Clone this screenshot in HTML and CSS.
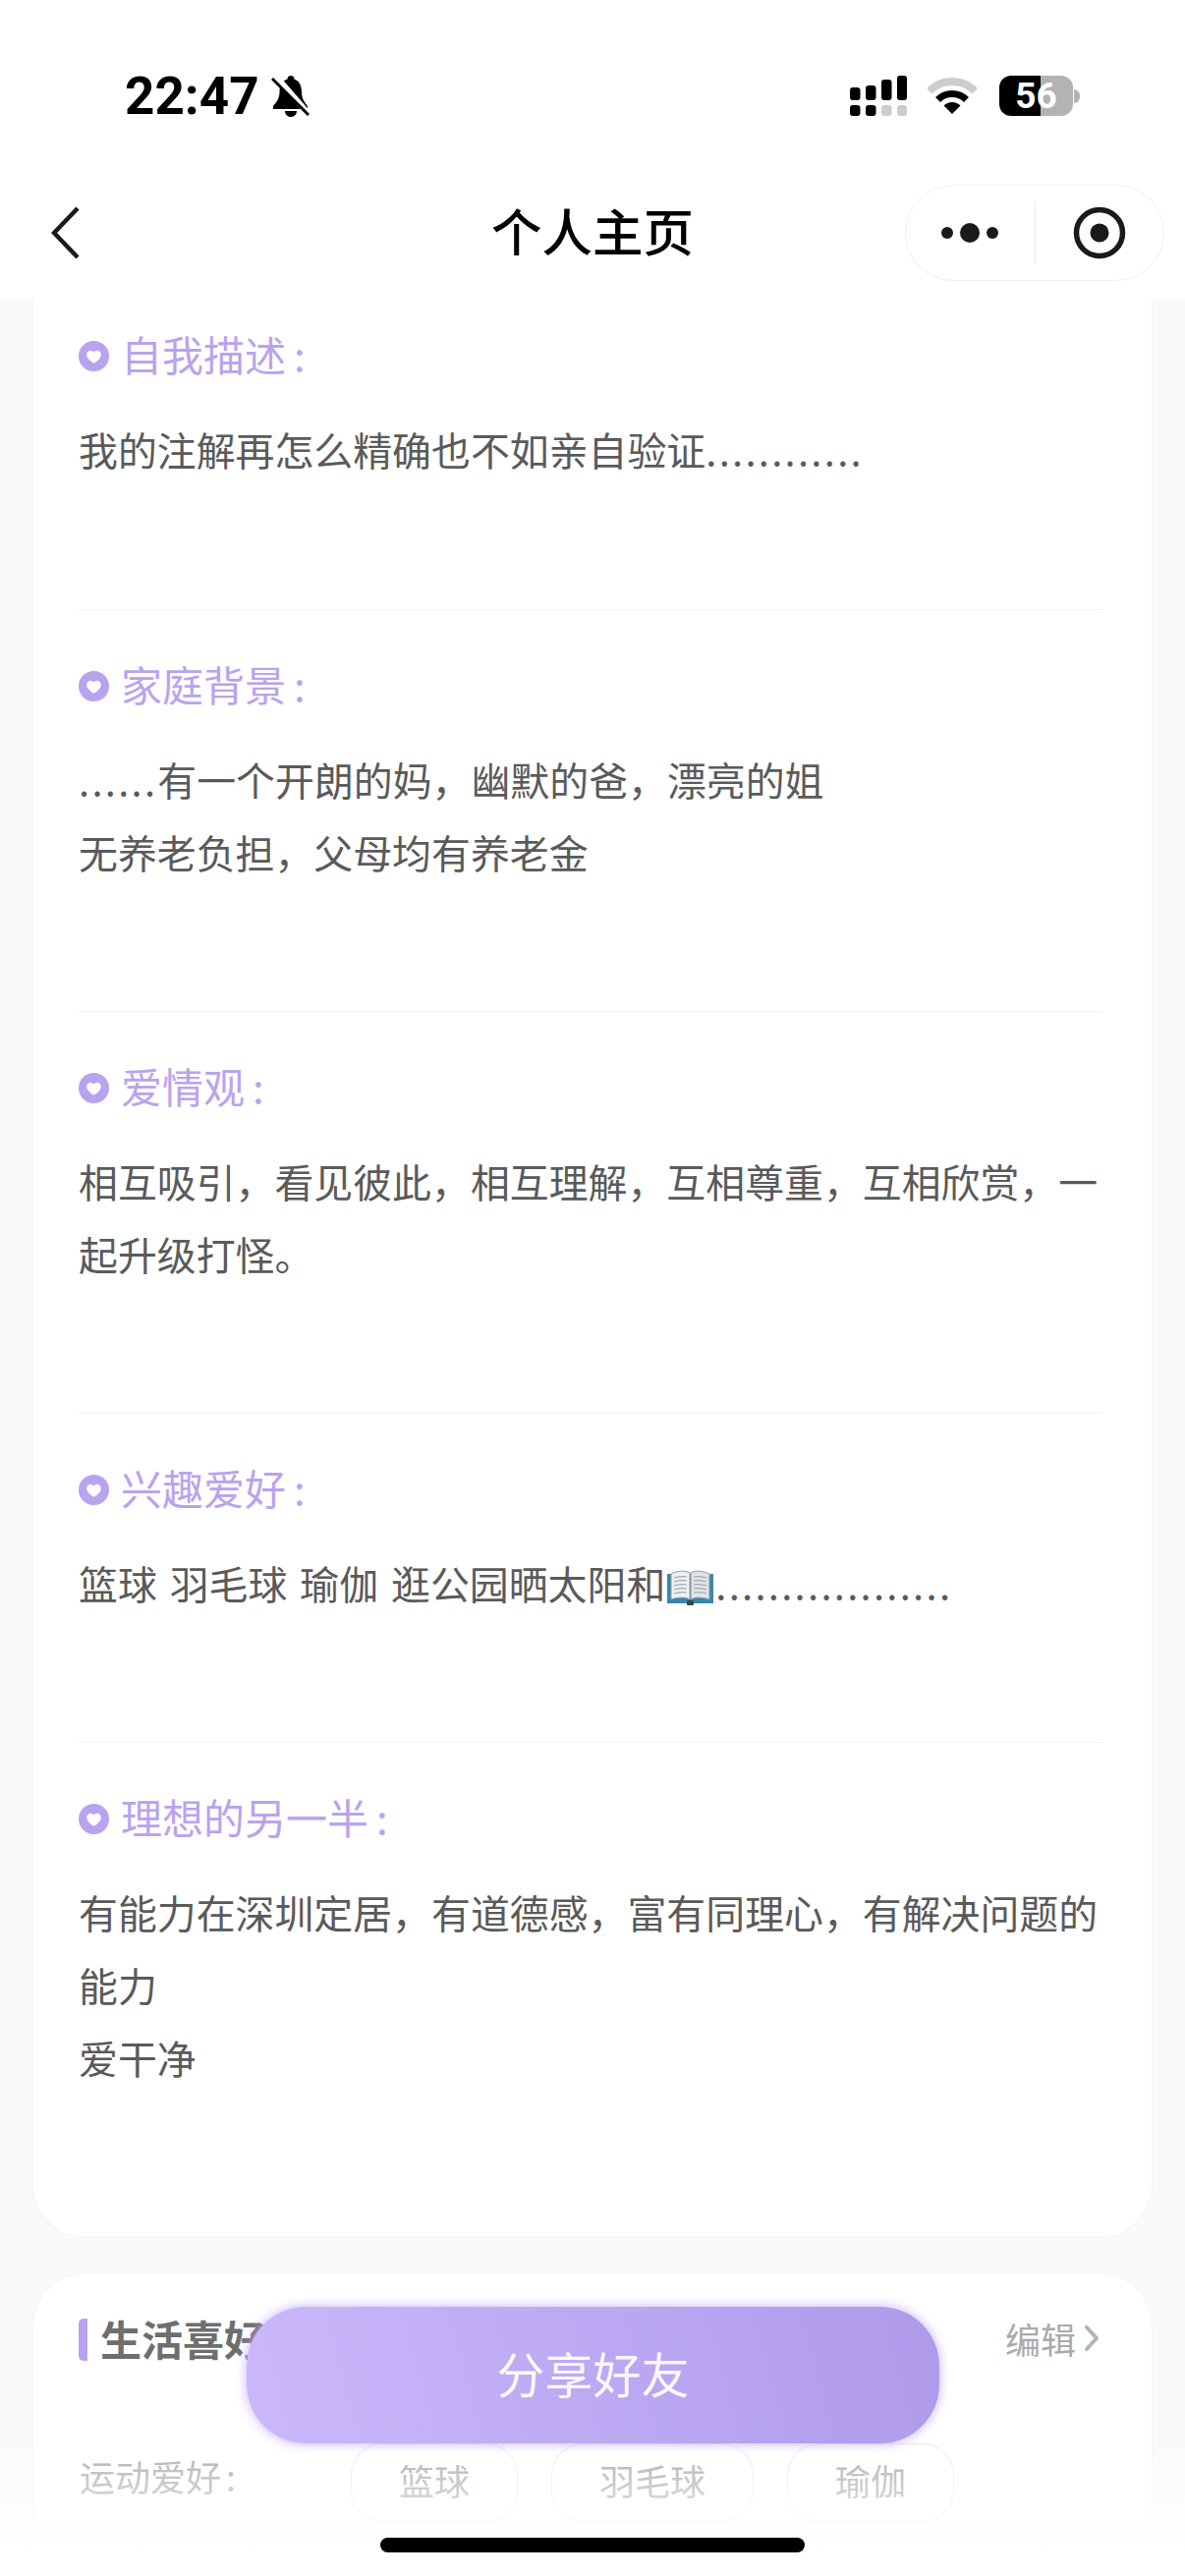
FILE: index.html
```html
<!DOCTYPE html>
<html lang="zh-CN">
<head>
  <meta charset="UTF-8">
  <title>个人主页</title>
  <meta name="viewport" content="width=device-width, initial-scale=1.0">
  <link rel="stylesheet" href="styles.css">
</head>
<body>
  <svg width="0" height="0" class="defs">
    <symbol id="pin" viewBox="0 0 30 30">
      <circle cx="15" cy="15" r="15" fill="#b9a3ee"/>
      <path d="M15 22c-4.200-2.800-7-5.200-7-8.500 0-2.300 1.800-4 3.800-4 1.400 0 2.500.7 3.200 1.900.7-1.200 1.800-1.900 3.200-1.900 2 0 3.800 1.700 3.800 4 0 3.300-2.800 5.700-7 8.500z" fill="#fff"/>
    </symbol>
  </svg>

  <!-- status bar -->
  <div class="statusbar">
    <div class="status-left">
      <span class="time">22:47</span>
      <svg class="bell" viewBox="0 0 39 42">
        <path d="M20 0c-2.200 0-3.400 1.500-3.500 3.500C10.500 5.500 8.500 11 8.500 17c0 6.500-3.500 10-6.500 14v3h35v-3c-3-4-6-7.500-6-14 0-6-2-11.500-7.500-13.500C23.400 1.500 22.200 0 20 0z" fill="#000"/>
        <path d="M14 36h12c0 3.500-2.500 6-6 6s-6-2.500-6-6z" fill="#000"/>
        <path d="M5 1l34 39" stroke="#fff" stroke-width="6"/>
        <path d="M1 3l37 37" stroke="#000" stroke-width="3"/>
      </svg>
    </div>
    <div class="status-right">
      <svg class="signal" viewBox="0 0 58 41">
        <rect x="0" y="12" width="10.500" height="13" rx="3" fill="#000"/>
        <rect x="16" y="10" width="10.500" height="15" rx="3" fill="#000"/>
        <rect x="32" y="4" width="10.500" height="21" rx="3" fill="#000"/>
        <rect x="48" y="0" width="10" height="25" rx="3" fill="#000"/>
        <rect x="0" y="30" width="10.500" height="11" rx="3" fill="#000"/>
        <rect x="16" y="30" width="10.500" height="11" rx="3" fill="#000"/>
        <rect x="32" y="30" width="10.500" height="11" rx="3" fill="#ccc"/>
        <rect x="48" y="30" width="10" height="11" rx="3" fill="#ccc"/>
      </svg>
      <svg class="wifi" viewBox="0 0 50 37">
        <path d="M1.700 13.700a33 33 0 0 1 46.600 0" fill="none" stroke="#ccc" stroke-width="8"/>
        <path d="M10.500 22.500a20.500 20.500 0 0 1 29 0" fill="none" stroke="#000" stroke-width="7"/>
        <path d="M25 37l-8.500-8.500a12 12 0 0 1 17 0z" fill="#000"/>
      </svg>
      <div class="battery">
        <div class="battery-body">56</div>
        <div class="battery-nib"></div>
      </div>
    </div>
  </div>

  <!-- nav -->
  <div class="nav">
    <div class="nav-left">
      <svg class="back" viewBox="0 0 30 54"><path d="M27 2L3 27l24 25" fill="none" stroke="#1a1a1a" stroke-width="4.500"/></svg>
    </div>
    <div class="nav-title">个人主页</div>
    <div class="nav-right">
      <div class="capsule">
        <div class="capsule-btn">
          <svg class="more" viewBox="0 0 58 20">
            <circle cx="6" cy="10" r="6" fill="#1a1a1a"/>
            <circle cx="29" cy="10" r="10" fill="#1a1a1a"/>
            <circle cx="52" cy="10" r="6" fill="#1a1a1a"/>
          </svg>
        </div>
        <div class="capsule-line"></div>
        <div class="capsule-btn">
          <svg class="target" viewBox="0 0 54 54">
            <circle cx="27" cy="27" r="23.500" fill="none" stroke="#1a1a1a" stroke-width="5.500"/>
            <circle cx="27" cy="27" r="9.500" fill="#1a1a1a"/>
          </svg>
        </div>
      </div>
    </div>
  </div>

  <div class="page">
    <div class="card card-intro">
      <div class="block block-first">
        <div class="block-label"><svg class="pin"><use href="#pin"/></svg><span>自我描述<span class="colon">:</span></span></div>
        <p class="block-text">我的注解再怎么精确也不如亲自验证<span class="dots">............</span></p>
      </div>
      <div class="block">
        <div class="block-label"><svg class="pin"><use href="#pin"/></svg><span>家庭背景<span class="colon">:</span></span></div>
        <p class="block-text"><span class="dots">......</span>有一个开朗的妈，幽默的爸，漂亮的姐<br>无养老负担，父母均有养老金</p>
      </div>
      <div class="block">
        <div class="block-label"><svg class="pin"><use href="#pin"/></svg><span>爱情观<span class="colon">:</span></span></div>
        <p class="block-text">相互吸引，看见彼此，相互理解，互相尊重，互相欣赏，一起升级打怪。</p>
      </div>
      <div class="block">
        <div class="block-label"><svg class="pin"><use href="#pin"/></svg><span>兴趣爱好<span class="colon">:</span></span></div>
        <p class="block-text hobbies">篮球 羽毛球 瑜伽 逛公园晒太阳和<svg class="book" viewBox="0 0 47 37">
            <path d="M0 5h47v30H27l-3.500 2L20 35H0z" fill="#3a86ad"/>
            <path d="M4 5c6-3 14-4 19-1v27c-5-3-13-2-19 0z" fill="#eef0f2" stroke="#8f989e"/>
            <path d="M43 5c-6-3-14-4-19-1v27c5-3 13-2 19 0z" fill="#e1e4e7" stroke="#8f989e"/>
            <path d="M7 9c4-1 9-2 13-1M7 13c4-1 9-2 13-1M7 17c4-1 9-2 13-1M7 21c4-1 9-2 13-1M7 25c4-1 9-2 13-1M40 9c-4-1-9-2-13-1M40 13c-4-1-9-2-13-1M40 17c-4-1-9-2-13-1M40 21c-4-1-9-2-13-1M40 25c-4-1-9-2-13-1" fill="none" stroke="#a2a9ae" stroke-width="1.200"/>
            <rect x="20" y="32" width="7" height="5" rx="1" fill="#3d4a3f"/>
          </svg><span class="dots">..................</span></p>
      </div>
      <div class="block block-last">
        <div class="block-label"><svg class="pin"><use href="#pin"/></svg><span>理想的另一半<span class="colon">:</span></span></div>
        <p class="block-text">有能力在深圳定居，有道德感，富有同理心，有解决问题的能力<br>爱干净</p>
      </div>
    </div>

    <div class="card card-likes">
      <div class="likes-head">
        <div class="likes-title">生活喜好</div>
        <div class="likes-edit">编辑<svg class="edit-arrow" viewBox="0 0 14 26"><path d="M2 2l10 11L2 24" fill="none" stroke="#b5b5b5" stroke-width="4" stroke-linecap="round" stroke-linejoin="round"/></svg></div>
      </div>
      <div class="likes-row">
        <div class="likes-label">运动爱好<span class="colon-sm">:</span></div>
        <div class="tags">
          <span class="tag">篮球</span>
          <span class="tag">羽毛球</span>
          <span class="tag">瑜伽</span>
        </div>
      </div>
    </div>
  </div>

  <div class="bottom-fade"></div>
  <div class="share-btn">分享好友</div>
  <div class="home-bar"></div>
</body>
</html>
```

FILE: styles.css
```css
* {
  box-sizing: border-box;
}

html, body {
  margin: 0;
  padding: 0;
}

body {
  width: 1206px;
  height: 2622px;
  overflow: hidden;
  position: relative;
  display: flex;
  flex-direction: column;
  background-color: #fff;
  font-family: "Noto Sans CJK SC", "Noto Sans", sans-serif;
  color: #555;
}

.defs {
  position: absolute;
}

/* status bar */
.statusbar {
  height: 170px;
  flex: none;
  display: flex;
  justify-content: space-between;
  padding: 77px 107px 0 127px;
}

.status-left {
  display: flex;
  align-items: center;
  gap: 12px;
  height: 42px;
}

.time {
  font-family: Roboto, sans-serif;
  font-weight: 700;
  font-size: 53px;
  line-height: 42px;
  color: #000;
}

.bell {
  width: 39px;
  height: 42px;
}

.status-right {
  display: flex;
  align-items: flex-start;
}

.signal {
  width: 58px;
  height: 41px;
  margin-right: 21px;
}

.wifi {
  width: 50px;
  height: 37px;
  margin: 2px 23px 0 0;
}

.battery {
  display: flex;
  align-items: center;
}

.battery-body {
  width: 75px;
  height: 41px;
  border-radius: 12px;
  background: linear-gradient(90deg, #000 56%, #b3b3b3 56%);
  color: #fff;
  font-family: Roboto, sans-serif;
  font-weight: 700;
  font-size: 37px;
  line-height: 41px;
  text-align: center;
}

.battery-nib {
  width: 6px;
  height: 14px;
  margin-left: 1px;
  border-radius: 0 6px 6px 0;
  background-color: #b3b3b3;
}

/* nav */
.nav {
  height: 133px;
  flex: none;
  display: grid;
  grid-template-columns: 1fr auto 1fr;
  align-items: center;
}

.nav-left {
  padding-left: 52px;
  display: flex;
}

.back {
  width: 30px;
  height: 54px;
}

.nav-title {
  font-size: 51.500px;
  font-weight: 500;
  color: #000;
  line-height: 60px;
  padding-bottom: 5px;
}

.nav-right {
  display: flex;
  justify-content: flex-end;
  padding-right: 21px;
}

.capsule {
  width: 264px;
  height: 98px;
  border: 1px solid #efefef;
  border-radius: 49px;
  display: flex;
  align-items: center;
}

.capsule-btn {
  flex: 1;
  display: flex;
  justify-content: center;
}

.capsule-line {
  width: 1px;
  height: 62px;
  background-color: #e8e8e8;
}

.more {
  width: 58px;
  height: 20px;
}

.target {
  width: 54px;
  height: 54px;
}

/* page */
.page {
  flex: 1;
  overflow: hidden;
  background-color: #fafafa;
  padding: 0 33px;
}

.card {
  background-color: #fff;
  border: 1px solid #f4f4f4;
}

.card-intro {
  border-top: none;
  border-radius: 0 0 54px 54px;
  padding: 0 49px 21px 46px;
  margin-bottom: 35px;
}

.block {
  padding: 48px 0 125px;
  border-bottom: 1px solid #f2f2f2;
}

.block-first {
  padding: 30px 0 126px;
}

.block-last {
  border-bottom: none;
}

.block-label {
  display: flex;
  align-items: flex-start;
  height: 60px;
  font-size: 42px;
  line-height: 53px;
  color: #b9a3ee;
  margin-bottom: 27px;
}

.pin {
  width: 31px;
  height: 31px;
  margin: 14px 12px 0 0;
  flex: none;
}

.colon {
  margin-left: 8px;
}

.block-text {
  margin: 0;
  font-size: 39.9px;
  line-height: 74px;
  color: #5a5a5a;
}

.dots {
  letter-spacing: 2.3px;
}

.hobbies {
  word-spacing: 4px;
}

.book {
  width: 47px;
  height: 37px;
  vertical-align: -6px;
  margin: 0 2px 0 2px;
}

/* second card */
.card-likes {
  border-radius: 54px 54px 0 0;
  padding: 46px 54px 0 46px;
}

.likes-head {
  display: flex;
  justify-content: space-between;
  align-items: center;
  height: 43px;
}

.likes-title {
  border-left: 9px solid #b9a3ee;
  border-radius: 5px;
  padding-left: 13px;
  height: 43px;
  line-height: 39px;
  font-size: 42px;
  font-weight: 700;
  color: #6e6e6e;
}

.likes-edit {
  display: flex;
  align-items: center;
  font-size: 36px;
  line-height: 43px;
  padding-bottom: 3px;
  color: #aaa;
}

.edit-arrow {
  width: 14px;
  height: 26px;
  margin-left: 9px;
}

.likes-row {
  display: flex;
  align-items: flex-start;
  margin-top: 84px;
}

.likes-label {
  width: 277px;
  padding-left: 1px;
  font-size: 36px;
  line-height: 67px;
  color: #a9a9a9;
}

.colon-sm {
  margin-left: 5px;
}

.tags {
  display: flex;
  gap: 34px;
}

.tag {
  height: 80px;
  padding: 0 48px;
  border: 1px solid #e8e8e8;
  border-radius: 32px;
  font-size: 36px;
  line-height: 73px;
  color: #a9a9a9;
}

/* things lying over the page */
.bottom-fade {
  position: absolute;
  left: 0;
  right: 0;
  top: 2480px;
  height: 142px;
  background: linear-gradient(180deg, rgba(255, 255, 255, 0), #fff 85%);
}

.share-btn {
  position: absolute;
  left: 251px;
  top: 2348px;
  width: 705px;
  height: 139px;
  border-radius: 60px;
  background: linear-gradient(75deg, #cbb8fb, #ae9aea);
  box-shadow: 0 0 12px rgba(190, 168, 250, 0.9);
  color: rgba(255, 255, 255, 0.92);
  font-size: 49px;
  line-height: 133px;
  text-align: center;
}

.home-bar {
  position: absolute;
  left: 387px;
  top: 2583px;
  width: 432px;
  height: 15px;
  border-radius: 8px;
  background-color: #000;
}
```
